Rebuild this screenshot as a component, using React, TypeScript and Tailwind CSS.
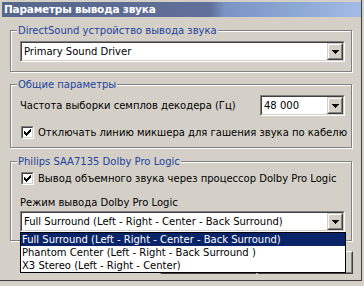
import type { ReactNode } from 'react'

function Arrow() {
  return (
    <svg width="7" height="4" viewBox="0 0 7 4" shapeRendering="crispEdges">
      <rect x="0" y="0" width="7" height="1" fill="#000" />
      <rect x="1" y="1" width="5" height="1" fill="#000" />
      <rect x="2" y="2" width="3" height="1" fill="#000" />
      <rect x="3" y="3" width="1" height="1" fill="#000" />
    </svg>
  )
}

function Combo({ value, className, children }: { value: string; className: string; children?: ReactNode }) {
  return (
    <div className={`relative ${className}`}>
      <div className="h-full border border-t-[#808080] border-l-[#808080] border-r-white border-b-white">
        <div className="h-full flex border border-t-[#404040] border-l-[#404040] border-r-[#d4d0c8] border-b-[#d4d0c8] bg-white">
          <div className="flex-1 flex items-center pl-[2px] text-black whitespace-nowrap overflow-hidden">{value}</div>
          <div className="w-[16px] h-full border border-t-[#d4d0c8] border-l-[#d4d0c8] border-r-[#404040] border-b-[#404040]">
            <div className="h-full flex items-center justify-center bg-[#d4d0c8] border border-t-white border-l-white border-r-[#808080] border-b-[#808080]">
              <Arrow />
            </div>
          </div>
        </div>
      </div>
      {children}
    </div>
  )
}

function Check({ label }: { label: string }) {
  return (
    <div className="flex items-center gap-[4px] h-[13px]">
      <div className="w-[13px] h-[13px] border border-t-[#808080] border-l-[#808080] border-r-white border-b-white">
        <div className="w-full h-full flex items-center justify-center bg-white border border-t-[#404040] border-l-[#404040] border-r-[#d4d0c8] border-b-[#d4d0c8]">
          <svg width="7" height="7" viewBox="0 0 7 7" shapeRendering="crispEdges">
            <path d="M0 2h1v1h1v1h1v-1h1v-1h1v-1h1v-1h1v3h-1v1h-1v1h-1v1h-1v1h-1v-1h-1v-1h-1v-1h-1z" fill="#000" />
          </svg>
        </div>
      </div>
      <span className="text-black whitespace-nowrap">{label}</span>
    </div>
  )
}

function Group({ title, className, children }: { title: string; className: string; children: ReactNode }) {
  return (
    <div className={`relative w-[342px] border border-[#808080] shadow-[inset_1px_1px_0_#fff,1px_1px_0_#fff] ${className}`}>
      <span className="absolute -top-[7px] left-[6px] px-[1px] bg-[#d4d0c8] text-[#21449e] leading-[13px] whitespace-nowrap">
        {title}
      </span>
      {children}
    </div>
  )
}

function Button() {
  return (
    <div className="w-[96px] h-[23px] border border-t-white border-l-white border-r-[#404040] border-b-[#404040]">
      <div className="h-full border border-t-[#d4d0c8] border-l-[#d4d0c8] border-r-[#808080] border-b-[#808080]" />
    </div>
  )
}

export default function App() {
  return (
    <div className="w-[364px] h-[286px] bg-[#d4d0c8] overflow-hidden font-['DejaVu_Sans',sans-serif] text-[10px] leading-[13px]">
      <div className="w-[362px] h-[281px] pl-[2px] pt-[2px] border-r border-b border-[#404040]">
        {/* Title bar */}
        <div className="h-[15px] flex items-center pl-[2px] bg-[linear-gradient(90deg,#56678b_0%,#60709a_58%,#7a94c4_62%,#8ca8d4_82%,#a2bce6_100%)]">
          <span className="text-white font-bold text-[10.5px] tracking-[-0.2px] whitespace-nowrap">Параметры вывода звука</span>
        </div>

        <div className="pl-[8px]">
          <Group title="DirectSound устройство вывода звука" className="mt-[13px] h-[42px] pt-[10px] pl-[9px]">
            <Combo value="Primary Sound Driver" className="w-[325px] h-[21px]" />
          </Group>

          <Group title="Общие параметры" className="mt-[12px] h-[64px] pt-[10px] pl-[9px]">
            <div className="flex items-center justify-between w-[325px]">
              <span className="text-black">Частота выборки семплов декодера (Гц)</span>
              <Combo value="48 000" className="w-[85px] h-[21px]" />
            </div>
            <div className="mt-[10px] pl-[1px]">
              <Check label="Отключать линию микшера для гашения звука по кабелю" />
            </div>
          </Group>

          <Group title="Philips SAA7135 Dolby Pro Logic" className="mt-[13px] h-[80px] pt-[10px] pl-[9px]">
            <div className="pl-[1px]">
              <Check label="Вывод объемного звука через процессор Dolby Pro Logic" />
            </div>
            <div className="mt-[11px] text-black">Режим вывода Dolby Pro Logic</div>
            <Combo value="Full Surround (Left - Right - Center - Back Surround)" className="mt-[2px] w-[325px] h-[21px] z-10">
              <div className="absolute left-0 top-full w-[326px] h-[41px] border border-black bg-white">
                <div className="h-[13px] pl-[1px] bg-[#0a246a] text-white whitespace-nowrap">
                  Full Surround (Left - Right - Center - Back Surround)
                </div>
                <div className="h-[13px] pl-[1px] text-black whitespace-nowrap">Phantom Center (Left - Right - Back Surround )</div>
                <div className="h-[13px] pl-[1px] text-black whitespace-nowrap">X3 Stereo (Left - Right - Center)</div>
              </div>
            </Combo>
          </Group>

          <div className="mt-[10px] w-[343px] flex justify-end gap-[1px]">
            <Button />
            <Button />
          </div>
        </div>
      </div>
    </div>
  )
}
